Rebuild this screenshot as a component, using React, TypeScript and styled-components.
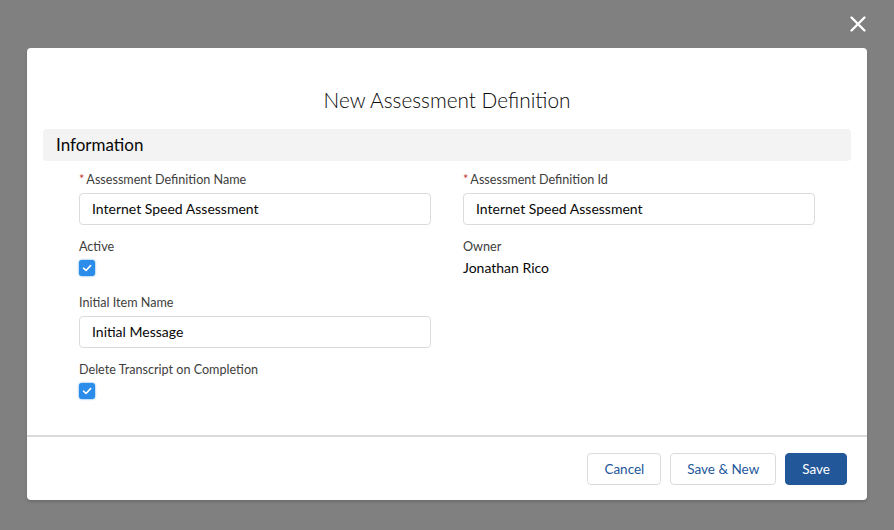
import styled, { createGlobalStyle } from "styled-components";

const GlobalStyle = createGlobalStyle`
  html, body {
    margin: 0;
    padding: 0;
    background: #808080;
    font-family: "Lato", "Open Sans", sans-serif;
    color: #080707;
  }
  * { box-sizing: border-box; }
`;

const Backdrop = styled.div`
  position: relative;
  width: 894px;
  height: 530px;
  padding: 48px 27px 30px;
`;

const CloseButton = styled.button`
  position: absolute;
  top: 14px;
  right: 26px;
  width: 20px;
  height: 20px;
  padding: 0;
  border: none;
  background: transparent;
  display: flex;
  align-items: center;
  justify-content: center;
  cursor: pointer;
`;

const Modal = styled.section`
  width: 840px;
  height: 452px;
  background: #fff;
  border-radius: 4px;
  box-shadow: 0 2px 3px rgba(0, 0, 0, 0.16);
  display: flex;
  flex-direction: column;
`;

const Header = styled.header`
  padding: 39px 16px 16px;
  text-align: center;
`;

const Title = styled.h2`
  margin: 0;
  font-size: 20.8px;
  line-height: 26px;
  font-weight: 300;
  color: #080707;
`;

const Body = styled.div`
  flex: 1;
  padding: 0 16px;
`;

const SectionHeader = styled.h3`
  margin: 0;
  height: 32px;
  padding: 0 13px 2px;
  display: flex;
  align-items: center;
  background: #f3f3f3;
  border-radius: 4px;
  font-size: 17px;
  font-weight: 400;
  color: #080707;
`;

const FieldGrid = styled.div`
  display: grid;
  grid-template-columns: 352px 352px;
  column-gap: 32px;
  padding: 10px 36px 0;
  align-items: start;
`;

const Field = styled.div<{ $gap?: number }>`
  display: flex;
  flex-direction: column;
  align-items: flex-start;
  margin-bottom: ${(p) => p.$gap ?? 13}px;
`;

const Label = styled.label`
  font-size: 12.6px;
  line-height: 18px;
  color: #3e3e3c;
  margin-bottom: 4px;
`;

const Required = styled.abbr`
  color: #c23934;
  text-decoration: none;
  margin-right: 2px;
`;

const Input = styled.input`
  width: 352px;
  height: 32px;
  padding: 0 12px 2px;
  border: 1px solid #dddbda;
  border-radius: 4px;
  font-family: inherit;
  font-size: 14px;
  color: #080707;
  outline: none;
`;

const Value = styled.div`
  font-size: 14px;
  line-height: 18px;
  color: #080707;
  margin-top: -1px;
`;

const Checkbox = styled.span`
  width: 16px;
  height: 16px;
  border-radius: 3px;
  background: #2b8cea;
  box-shadow: 0 0 2px #2b8cea;
  display: flex;
  align-items: center;
  justify-content: center;
`;

const Footer = styled.footer`
  border-top: 2px solid #dddbda;
  padding: 16px 20px 15px;
  display: flex;
  justify-content: flex-end;
  gap: 9px;
`;

const Button = styled.button<{ $brand?: boolean }>`
  height: 32px;
  padding: 0 16px 1px;
  border-radius: 4px;
  font-family: inherit;
  font-size: 13.5px;
  cursor: pointer;
  border: 1px solid ${(p) => (p.$brand ? "#22579a" : "#dddbda")};
  background: ${(p) => (p.$brand ? "#22579a" : "#fff")};
  color: ${(p) => (p.$brand ? "#fff" : "#22579a")};
`;

const Check = () => (
  <svg width="10" height="8" viewBox="0 0 10 8">
    <path d="M1.5 4.2 L4 6.5 L8.6 1.6" fill="none" stroke="#fff" strokeWidth="1.6" strokeLinecap="round" strokeLinejoin="round" />
  </svg>
);

export default function App() {
  return (
    <>
      <GlobalStyle />
      <Backdrop>
        <CloseButton aria-label="Close">
          <svg width="18" height="18" viewBox="0 0 18 18">
            <path d="M2.5 2.5 L15.5 15.5 M15.5 2.5 L2.5 15.5" stroke="#fff" strokeWidth="2.4" strokeLinecap="round" />
          </svg>
        </CloseButton>
        <Modal>
          <Header>
            <Title>New Assessment Definition</Title>
          </Header>
          <Body>
            <SectionHeader>Information</SectionHeader>
            <FieldGrid>
              <Field>
                <Label>
                  <Required>*</Required>Assessment Definition Name
                </Label>
                <Input defaultValue="Internet Speed Assessment" />
              </Field>
              <Field>
                <Label>
                  <Required>*</Required>Assessment Definition Id
                </Label>
                <Input defaultValue="Internet Speed Assessment" />
              </Field>
              <Field $gap={17}>
                <Label>Active</Label>
                <Checkbox>
                  <Check />
                </Checkbox>
              </Field>
              <Field $gap={17}>
                <Label>Owner</Label>
                <Value>Jonathan Rico</Value>
              </Field>
              <Field>
                <Label>Initial Item Name</Label>
                <Input defaultValue="Initial Message" />
              </Field>
              <div />
              <Field>
                <Label>Delete Transcript on Completion</Label>
                <Checkbox>
                  <Check />
                </Checkbox>
              </Field>
            </FieldGrid>
          </Body>
          <Footer>
            <Button>Cancel</Button>
            <Button>Save &amp; New</Button>
            <Button $brand>Save</Button>
          </Footer>
        </Modal>
      </Backdrop>
    </>
  );
}
